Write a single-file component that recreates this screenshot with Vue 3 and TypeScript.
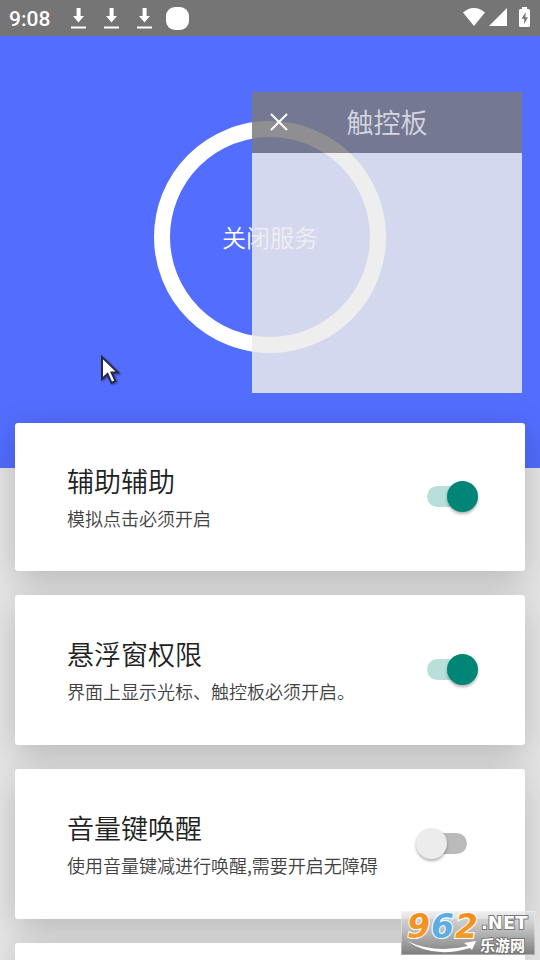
<script setup lang="ts">
import { ref } from 'vue'

interface Setting {
  id: string
  title: string
  note: string
  on: boolean
}

const settings = ref<Setting[]>([
  { id: 'assist', title: '辅助辅助', note: '模拟点击必须开启', on: true },
  { id: 'float', title: '悬浮窗权限', note: '界面上显示光标、触控板必须开启。', on: true },
  { id: 'volume', title: '音量键唤醒', note: '使用音量键减进行唤醒,需要开启无障碍', on: false }
])
const padOpen = ref(true)
</script>

<template>
  <div class="screen">
    <header class="status">
      <time class="clock">9:08</time>
      <div class="notices">
        <svg v-for="n in 3" :key="n" class="download" viewBox="0 0 15 21">
          <path d="M5.600 0h4v8H13L7.500 14.500 2 8h3.600zM0 18.500h15v2H0z" />
        </svg>
      </div>
      <span class="blob"></span>
      <div class="system">
        <svg class="wifi" viewBox="0 0 22 18"><path d="M11 18 0 4.600C3 1.800 6.800 0 11 0s8 1.800 11 4.600z" /></svg>
        <svg class="signal" viewBox="0 0 18 18"><path d="M18 0v18H0z" /></svg>
        <svg class="battery" viewBox="0 0 11 20">
          <path fill-rule="evenodd" d="M3 0h5v2h1.500Q11 2 11 3.500v15Q11 20 9.500 20h-8Q0 20 0 18.500v-15Q0 2 1.500 2H3zM6.800 5 2.500 11.800h2.700V17l3.700-6.800H6.300z" />
        </svg>
      </div>
    </header>

    <main class="content">
      <section class="hero">
        <button class="service" type="button">关闭服务</button>
      </section>
      <section class="cards">
        <article v-for="s in settings" :key="s.id" class="card">
          <label class="text" :for="s.id">
            <span class="title">{{ s.title }}</span>
            <span class="note">{{ s.note }}</span>
          </label>
          <input :id="s.id" v-model="s.on" class="switch" type="checkbox" />
        </article>
        <article class="card"></article>
      </section>
    </main>

    <aside v-if="padOpen" class="pad">
      <div class="pad-head">
        <button class="close" type="button" aria-label="关闭" @click="padOpen = false">
          <svg viewBox="0 0 18 18"><path d="M1 1l16 16M17 1L1 17" /></svg>
        </button>
        <span class="pad-title">触控板</span>
      </div>
      <div class="pad-body"></div>
    </aside>

    <svg class="cursor" viewBox="0 0 24 32">
      <path d="M2 3v22l5.500-5 4 9 4-2-4-8.500H18z" />
    </svg>

    <div class="mark">
      <svg viewBox="0 -8 134 52">
        <defs>
          <linearGradient id="shade" x1="0" y1="0" x2="0" y2="1">
            <stop offset="0" stop-color="#e6e6e6" stop-opacity="0.6" />
            <stop offset="0.5" stop-color="#b4b4b4" stop-opacity="0.95" />
            <stop offset="1" stop-color="#7c7c7c" />
          </linearGradient>
          <linearGradient id="orange" x1="0" y1="0" x2="0" y2="1">
            <stop offset="0" stop-color="#f08a1c" />
            <stop offset="1" stop-color="#f5a030" />
          </linearGradient>
        </defs>
        <rect width="134" height="44" fill="url(#shade)" />
        <rect x="0.500" y="0.500" width="133" height="43" fill="none" stroke="#fff" stroke-opacity="0.35" />
        <path d="M6 30Q34 43 67 35l-4-3 12-2-4 9-2-2Q32 48 6 30z" fill="#fff" />
        <g class="digits">
          <text x="6" y="27" fill="url(#orange)">9</text>
          <text x="30" y="27" fill="#5aaee4">6</text>
          <text x="54" y="27" fill="url(#orange)">2</text>
        </g>
        <text class="net" x="80" y="18">.NET</text>
        <text class="name" x="79" y="40">乐游网</text>
      </svg>
    </div>
  </div>
</template>

<style>
body {
  margin: 0;
}
</style>

<style scoped>
.screen {
  position: relative;
  display: flex;
  flex-direction: column;
  height: 100vh;
  overflow: hidden;
  background: #e6e6e6;
  font-family: "Noto Sans CJK SC", sans-serif;
  font-weight: 350;
}
button {
  padding: 0;
  border: 0;
  background: none;
  color: inherit;
  font: inherit;
}
.status {
  flex: none;
  display: flex;
  align-items: center;
  box-sizing: border-box;
  height: 36px;
  padding: 0 10px 0 9px;
  background: #757575;
  color: #fff;
}
.status svg {
  fill: #fff;
}
.clock {
  width: 62px;
  padding-top: 1px;
  font-family: Roboto, sans-serif;
  font-size: 21px;
  font-weight: 500;
}
.notices {
  display: flex;
  gap: 18px;
}
.download {
  width: 15px;
  height: 21px;
}
.blob {
  width: 23px;
  height: 23px;
  margin-left: 14px;
  border-radius: 9px;
  background: #fff;
}
.system {
  display: flex;
  align-items: center;
  margin-left: auto;
  padding-bottom: 2px;
}
.wifi {
  width: 22px;
  height: 18px;
}
.signal {
  width: 18px;
  height: 18px;
  margin: 0 12px 0 4px;
}
.battery {
  width: 11px;
  height: 20px;
}
.content {
  flex: 1;
  overflow-y: auto;
  scrollbar-width: none;
}
.hero {
  display: flex;
  justify-content: center;
  box-sizing: border-box;
  height: 432px;
  padding-top: 85px;
  background: #536dfe;
}
.service {
  box-sizing: border-box;
  width: 232px;
  height: 232px;
  padding-bottom: 2px;
  border: 16px solid #fff;
  border-radius: 50%;
  color: #fff;
  font-size: 24px;
}
.cards {
  display: flex;
  flex-direction: column;
  gap: 24px;
  margin-top: -45px;
  padding: 0 15px 24px;
}
.card {
  display: flex;
  align-items: center;
  justify-content: space-between;
  box-sizing: border-box;
  min-height: 150px;
  padding: 0 47px 2px 52px;
  border-radius: 3px;
  background: #fff;
  box-shadow: 0 10px 36px rgba(0, 0, 0, 0.2);
}
.card:first-child {
  min-height: 148px;
}
.text {
  display: flex;
  flex-direction: column;
  padding-top: 4px;
}
.title {
  color: #212121;
  font-size: 27px;
  line-height: 40px;
}
.note {
  color: #424242;
  font-size: 18px;
  line-height: 34px;
}
.switch {
  appearance: none;
  display: grid;
  align-items: center;
  width: 62px;
  height: 31px;
  margin: 0;
}
.switch::before {
  content: "";
  grid-area: 1 / 1;
  height: 21px;
  margin: 0 11px;
  border-radius: 11px;
  background: #bababa;
}
.switch::after {
  content: "";
  grid-area: 1 / 1;
  width: 31px;
  height: 31px;
  border-radius: 50%;
  background: #ececec;
  box-shadow: 0 2px 3px rgba(0, 0, 0, 0.3);
}
.switch:checked::before {
  background: #b9dfda;
}
.switch:checked::after {
  justify-self: end;
  background: #008577;
}
.pad {
  position: absolute;
  top: 92px;
  right: 18px;
  width: 50%;
  display: flex;
  flex-direction: column;
}
.pad-head {
  display: grid;
  grid-template-columns: 54px 1fr 54px;
  align-items: center;
  box-sizing: border-box;
  height: 61px;
  padding-bottom: 2px;
  background: rgba(123, 122, 127, 0.85);
}
.close {
  display: grid;
  place-items: center;
  height: 54px;
}
.close svg {
  width: 18px;
  height: 18px;
  fill: none;
  stroke: #fff;
  stroke-width: 2;
}
.pad-title {
  color: #d5d6e0;
  font-size: 27px;
  text-align: center;
}
.pad-body {
  height: 240px;
  background: rgba(235, 235, 235, 0.85);
}
.cursor {
  position: absolute;
  top: 354px;
  left: 100px;
  width: 24px;
  height: 32px;
  fill: #fff;
  stroke: #262a4a;
  stroke-width: 2;
  filter: drop-shadow(1px 1px 1px rgba(0, 0, 0, 0.4));
}
.mark {
  position: absolute;
  right: 5px;
  bottom: 5px;
  width: 134px;
  height: 52px;
}
.mark svg {
  display: block;
  width: 134px;
  height: 52px;
}
.digits {
  font: italic bold 33px "DejaVu Sans", sans-serif;
  stroke: #fff;
  stroke-width: 2;
  paint-order: stroke;
}
.net,
.name {
  fill: #fff;
  stroke: #777;
  stroke-width: 2;
  paint-order: stroke;
}
.net {
  font: bold 18px "DejaVu Sans", sans-serif;
}
.name {
  font: bold 15px "Noto Sans CJK SC", sans-serif;
}
</style>
